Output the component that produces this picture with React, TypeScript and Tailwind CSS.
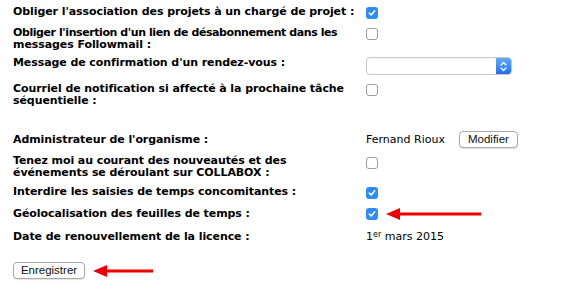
import React from "react";

const font = { fontFamily: '"DejaVu Sans", Verdana, sans-serif' };

function Check({ checked }: { checked?: boolean }) {
  if (checked) {
    return (
      <div className="w-[12px] h-[12px] rounded-[3px] bg-[#2d8cf5] flex items-center justify-center shrink-0">
        <svg width="8" height="8" viewBox="0 0 8 8">
          <path d="M1.3 4.2 L3.2 6 L6.7 1.8" fill="none" stroke="white" strokeWidth="1.6" strokeLinecap="round" strokeLinejoin="round" />
        </svg>
      </div>
    );
  }
  return <div className="w-[12px] h-[12px] rounded-[3px] bg-white border border-[#9d9d9d] shrink-0" />;
}

function Arrow({ w }: { w: number }) {
  return (
    <svg width={w} height="14" viewBox={`0 0 ${w} 14`} className="shrink-0">
      <polygon points="0,7 14,1 14,13" fill="#ee0000" />
      <rect x="12" y="5.5" width={w - 12} height="3" fill="#ee0000" />
    </svg>
  );
}

function Btn({ children, w }: { children: React.ReactNode; w: string }) {
  return (
    <div
      className={`${w} h-[17px] bg-white border border-[#a9a9a9] rounded-[4px] shadow-[0_1px_1px_rgba(0,0,0,0.12)] flex items-center justify-center text-[11.5px] text-[#111] leading-none`}
      style={{ fontFamily: '"Liberation Sans", Arial, sans-serif' }}
    >
      {children}
    </div>
  );
}

function Label({ children }: { children: React.ReactNode }) {
  return (
    <div className="w-[353px] shrink-0 font-bold text-[11px] leading-[12px] tracking-[-0.08px] text-black pr-[4px]">
      {children}
    </div>
  );
}

export default function App() {
  return (
    <div className="w-[563px] h-[290px] bg-white pl-[13px] pt-[6px] text-black" style={font}>
      <div className="flex h-[21px] items-start">
        <Label>Obliger l'association des projets à un chargé de projet :</Label>
        <div className="mt-[1px]"><Check checked /></div>
      </div>
      <div className="flex h-[30px] items-start">
        <Label>
          <span className="whitespace-nowrap tracking-[-0.42px]">Obliger l'insertion d'un lien de désabonnement dans les</span>
          <br />
          messages Followmail :
        </Label>
        <div className="mt-[1px]"><Check /></div>
      </div>
      <div className="flex h-[26px] items-start">
        <Label>Message de confirmation d'un rendez-vous :</Label>
        <div className="w-[146px] h-[18px] rounded-[4px] border border-[#c9c9c9] bg-white flex justify-end overflow-hidden shadow-[inset_0_1px_1px_rgba(0,0,0,0.04)]">
          <div className="w-[15px] h-full bg-gradient-to-b from-[#63a8f8] to-[#1f70ee] flex items-center justify-center">
            <svg width="7" height="11" viewBox="0 0 7 11">
              <path d="M1 4 L3.5 1.5 L6 4 M1 7 L3.5 9.5 L6 7" fill="none" stroke="white" strokeWidth="1.3" strokeLinecap="round" strokeLinejoin="round" />
            </svg>
          </div>
        </div>
      </div>
      <div className="flex h-[30px] items-start">
        <Label>Courriel de notification si affecté à la prochaine tâche séquentielle :</Label>
        <div className="mt-[1px]"><Check /></div>
      </div>
      <div className="h-[21px]" />
      <div className="flex h-[21px] items-start">
        <Label>Administrateur de l'organisme :</Label>
        <div className="flex items-start">
          <span className="text-[11px] leading-[12px]">Fernand Rioux</span>
          <div className="ml-[14px] -mt-[3px]"><Btn w="w-[59px]">Modifier</Btn></div>
        </div>
      </div>
      <div className="flex h-[31px] items-start">
        <Label>Tenez moi au courant des nouveautés et des événements se déroulant sur COLLABOX :</Label>
        <div className="mt-[2px]"><Check /></div>
      </div>
      <div className="flex h-[22px] items-start">
        <Label>Interdire les saisies de temps concomitantes :</Label>
        <div className="mt-[1px]"><Check checked /></div>
      </div>
      <div className="flex h-[23px] items-start">
        <Label>Géolocalisation des feuilles de temps :</Label>
        <div className="flex items-center -mt-[1px]">
          <Check checked />
          <div className="ml-[8px]"><Arrow w={95} /></div>
        </div>
      </div>
      <div className="flex h-[31px] items-start">
        <Label>Date de renouvellement de la licence :</Label>
        <span className="text-[11px] leading-[12px]">
          1<span className="text-[8px] relative -top-[3px]">er</span> mars 2015
        </span>
      </div>
      <div className="flex items-center">
        <Btn w="w-[72px]">Enregistrer</Btn>
        <div className="ml-[8px]"><Arrow w={60} /></div>
      </div>
    </div>
  );
}
